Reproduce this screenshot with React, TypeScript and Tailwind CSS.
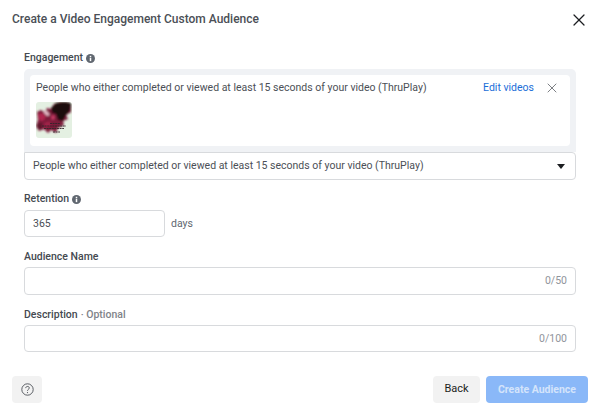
import { X } from 'lucide-react';

function InfoDot() {
  return (
    <svg width="9" height="9" viewBox="0 0 12 12" className="shrink-0">
      <circle cx="6" cy="6" r="6" fill="#606770" />
      <rect x="5" y="5" width="2" height="4.5" fill="#fff" />
      <rect x="5" y="2.4" width="2" height="1.8" fill="#fff" />
    </svg>
  );
}

function Thumb() {
  return (
    <svg width="36" height="36" viewBox="0 0 36 36" className="rounded-[3px] block">
      <defs>
        <filter id="soft" x="-10%" y="-10%" width="120%" height="120%">
          <feGaussianBlur stdDeviation="0.9" />
        </filter>
      </defs>
      <rect width="36" height="36" fill="#e4f0e2" />
      <g filter="url(#soft)">
        <path d="M1 10 L5 8 L9 10 L11 6 L15 7 L18 2 L24 0 L31 0 L35 3 L35 10 L30 13 L32 17 L27 19 L28 23 L22 26 L20 31 L15 28 L12 31 L8 27 L3 29 L0 24 L2 18 Z" fill="#7d1a3a" />
        <path d="M15 6 L20 1 L28 0 L35 1 L34 9 L30 13 L27 19 L22 18 L20 12 L16 11 Z" fill="#1f080d" />
        <path d="M2 12 L7 11 L10 15 L7 19 L3 18 Z" fill="#b02650" />
        <path d="M8 21 L14 19 L15 24 L9 26 Z" fill="#a1224a" />
        <path d="M7 8 L11 9 L14 13 L11 14 L8 11 Z" fill="#e3b8c5" />
        <path d="M16 13 L19 14 L18 18 L15 17 Z" fill="#c93d66" />
        <path d="M1 22 L6 21 L6 27 L2 27 Z" fill="#5c1329" />
      </g>
      <path d="M14 21.5 H24 M6 24 H30 M8 26.5 H28 M17 30 H24" stroke="#33242a" strokeWidth="0.9" strokeDasharray="2 0.6" />
    </svg>
  );
}

function Label({ children }: { children: React.ReactNode }) {
  return <div className="flex items-center gap-[3px] h-[14px] text-[10.5px] font-medium text-[#444950] leading-[14px]">{children}</div>;
}

function CountField({ count, height }: { count: string; height: string }) {
  return (
    <div className={`${height} border border-[#d8dadd] rounded-[4px] bg-white flex items-center justify-end pr-[8px] text-[10.5px] text-[#90949c]`}>
      {count}
    </div>
  );
}

export default function App() {
  const text = 'People who either completed or viewed at least 15 seconds of your video (ThruPlay)';
  return (
    <div className="w-[601px] h-[409px] bg-white overflow-hidden flex flex-col font-['Roboto',sans-serif] text-[#444950]">
      <div className="h-[37px] flex items-center justify-between pl-[12px] pr-[12px] pt-[1px]">
        <h1 className="text-[12px] font-medium text-[#4b4f56]">Create a Video Engagement Custom Audience</h1>
        <X size={20} strokeWidth={1.5} className="text-[#1c1e21] mt-[1px]" />
      </div>

      <div className="flex-1 pl-[24px] pr-[25px] pt-[14px]">
        <Label>Engagement <InfoDot /></Label>
        <div className="mt-[4px] bg-[#f0f2f5] rounded-t-[5px] p-[6px]">
          <div className="bg-white rounded-[4px] h-[71px] pl-[6px] pr-[10px] pt-[6px]">
            <div className="flex items-center justify-between h-[14px] text-[10.5px]">
              <span className="text-[#4b4f56]">{text}</span>
              <div className="flex items-center gap-[10px]">
                <span className="text-[#1a6ed8]">Edit videos</span>
                <X size={16} strokeWidth={1.1} className="text-[#4b4f56]" />
              </div>
            </div>
            <div className="mt-[7px]"><Thumb /></div>
          </div>
        </div>
        <div className="h-[28px] border border-[#d8dadd] rounded-b-[4px] rounded-tr-[4px] bg-white flex items-center justify-between pl-[8px] pr-[10px] text-[10.5px] text-[#4b4f56]">
          <span>{text}</span>
          <svg width="8" height="5" viewBox="0 0 8 5"><path d="M0 0 H8 L4 5 Z" fill="#1c1e21" /></svg>
        </div>

        <div className="mt-[12px]"><Label>Retention <InfoDot /></Label></div>
        <div className="mt-[4px] flex items-center gap-[6px]">
          <div className="w-[141px] h-[27px] border border-[#d8dadd] rounded-[4px] flex items-center pl-[8px] text-[10.5px] text-[#4b4f56]">365</div>
          <span className="text-[10.5px] text-[#606770]">days</span>
        </div>

        <div className="mt-[13px]"><Label>Audience Name</Label></div>
        <div className="mt-[3px]"><CountField count="0/50" height="h-[28px]" /></div>

        <div className="mt-[13px]"><Label>Description <span className="text-[#7f8389]">· Optional</span></Label></div>
        <div className="mt-[3px]"><CountField count="0/100" height="h-[27px]" /></div>
      </div>

      <div className="h-[33px] flex items-start justify-between pl-[12px] pr-[13px]">
        <div className="w-[30px] h-[27px] bg-[#f2f2f2] rounded-[4px] flex items-center justify-center">
          <svg width="13" height="13" viewBox="0 0 13 13" fill="none">
            <circle cx="6.5" cy="6.5" r="5.7" stroke="#4b4f56" strokeWidth="0.9" />
            <path d="M4.7 5.1 C4.8 2.9 8.3 2.9 8.3 5 C8.3 6.3 6.5 6.3 6.5 7.8" stroke="#4b4f56" strokeWidth="0.9" />
            <circle cx="6.5" cy="9.6" r="0.6" fill="#4b4f56" />
          </svg>
        </div>
        <div className="flex gap-[6px]">
          <div className="w-[47px] h-[27px] bg-[#f2f2f2] rounded-[4px] flex items-center justify-center text-[11px] text-[#1c1e21]">Back</div>
          <div className="w-[102px] h-[27px] bg-[#8ab8f8] rounded-[4px] flex items-center justify-center text-[10.5px] font-bold text-[#d4e4fb]">Create Audience</div>
        </div>
      </div>
    </div>
  );
}
